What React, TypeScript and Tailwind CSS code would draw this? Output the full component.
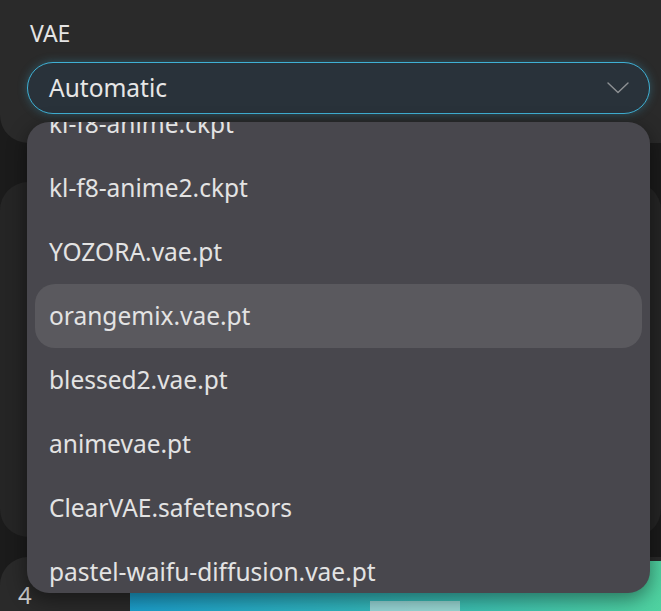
import React, { useState } from "react";

const vaeList = [
  "kl-f8-anime.ckpt",
  "kl-f8-anime2.ckpt",
  "YOZORA.vae.pt",
  "orangemix.vae.pt",
  "blessed2.vae.pt",
  "animevae.pt",
  "ClearVAE.safetensors",
  "pastel-waifu-diffusion.vae.pt",
];

const Chevron = () => (
  <svg width="22" height="12" viewBox="0 0 22 12" fill="none">
    <path d="M1 1 L11 10.5 L21 1" stroke="#8e9194" strokeWidth="1.4" strokeLinecap="round" strokeLinejoin="round" />
  </svg>
);

const App = () => {
  const [hovered] = useState("orangemix.vae.pt");

  return (
    <div
      className="w-[661px] h-[611px] bg-[#1b1b1b] overflow-hidden relative"
      style={{ fontFamily: '"Noto Sans", "Open Sans", sans-serif' }}
    >
      {/* settings card with the select */}
      <div className="h-[143px] bg-[#2a2a2a] rounded-bl-[28px] pt-[18px] pl-[27px] pr-[11px] relative z-10">
        <div className="h-[30px] pl-[3px] text-[23px] leading-[30px] text-[#e4e4e4]">VAE</div>
        <div className="relative mt-[14px]">
          <div className="h-[52px] rounded-full border border-[#3fb0d4] bg-[#29323a] shadow-[0_0_10px_rgba(60,170,210,0.35)] flex items-center justify-between pl-[21px] pr-[20px]">
            <span className="text-[24.5px] text-[#e6e6e6]">Automatic</span>
            <Chevron />
          </div>
          <div className="absolute left-0 top-[60px] w-[623px] h-[471px] rounded-[22px] bg-[#48474d] overflow-hidden shadow-[0_6px_20px_rgba(0,0,0,0.45)]">
            <div className="-mt-[30px] px-[8px]">
              {vaeList.map((name) => (
                <div
                  key={name}
                  className={`h-[64px] rounded-[20px] flex items-center pl-[14px] text-[24.5px] text-[#e3e3e3] ${
                    hovered === name ? "bg-[#5a595e]" : ""
                  }`}
                >
                  {name}
                </div>
              ))}
            </div>
          </div>
        </div>
      </div>

      {/* middle card */}
      <div className="mt-[39px] h-[355px] bg-[#252525] rounded-[28px]" />

      {/* bottom card */}
      <div className="mt-[20px] h-[60px] bg-[#2a2a2a] rounded-tl-[28px] flex">
        <div className="w-[130px] pl-[18px] pt-[20px] text-[24px] text-[#cfcfcf]">4</div>
        <div className="flex-1 mt-[4px] bg-gradient-to-r from-[#1c9fcc] to-[#4fd2a0] flex pl-[240px] pt-[40px]">
          <div className="w-[90px] h-[20px] bg-[#d8e8e8]/60" />
        </div>
      </div>
    </div>
  );
};

export default App;
